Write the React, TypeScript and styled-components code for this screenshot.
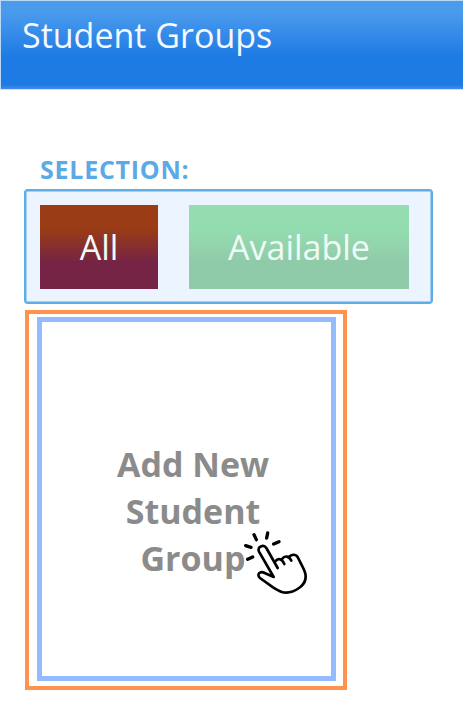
import React from "react";
import styled, { createGlobalStyle } from "styled-components";

const GlobalStyle = createGlobalStyle`
  * { box-sizing: border-box; }
  body {
    margin: 0;
    background: #fff;
    font-family: "Open Sans", "Noto Sans", sans-serif;
    overflow: hidden;
  }
`;

const Page = styled.div`
  height: 701px;
  background: #fff;
  overflow: hidden;
`;

const Header = styled.header`
  height: 90px;
  padding: 11px 0 0 21px;
  border-top: 1px solid #b9d9f7;
  border-left: 1px solid #b9d9f7;
  border-bottom: 1px solid #cfe0fc;
  background: linear-gradient(#4a9bec 0, #4a9bec 11px, #1f7be4 55px, #1f7be4 84px, #4789ed 88px);
`;

const Title = styled.h1`
  margin: 0;
  color: #f4f9ff;
  font-size: 34px;
  font-weight: 400;
  line-height: 46px;
  white-space: nowrap;
`;

const Content = styled.main`
  display: flex;
  flex-direction: column;
  align-items: flex-start;
  padding: 63px 0 0 24px;
`;

const Label = styled.div`
  height: 36px;
  padding-left: 16px;
  color: #5baae6;
  font-size: 25px;
  font-weight: 700;
  line-height: 32px;
  letter-spacing: 0.75px;
  white-space: nowrap;
`;

const Selection = styled.div`
  display: flex;
  gap: 31px;
  width: 409px;
  height: 115px;
  padding: 14px;
  border: 2px solid #5fade7;
  border-radius: 4px;
  background: #ecf5ff;
  box-shadow: inset 0 0 0 1px #a5d1f3;
`;

const FilterButton = styled.button<{ $width: number; $top: string; $bottom: string }>`
  width: ${(p) => p.$width}px;
  height: 83.5px;
  padding: 1px 0 0;
  border: 0;
  background: linear-gradient(${(p) => p.$top} 28%, ${(p) => p.$bottom} 68%);
  color: #f0faf6;
  font: 400 34px/46px "Open Sans", "Noto Sans", sans-serif;
`;

const Highlight = styled.section`
  width: 322px;
  height: 380px;
  margin: 6px 0 0 1px;
  padding: 3px 7px 5px 8px;
  border: 4px solid #ff924c;
`;

const Card = styled.div`
  position: relative;
  display: flex;
  align-items: center;
  justify-content: center;
  height: 364px;
  padding: 25px 0 0 13px;
  border: 5px solid #94bbfd;
  color: #8b8b8b;
  font-size: 34px;
  font-weight: 700;
  line-height: 47px;
  text-align: center;
`;

const CardText = styled.div`
  width: 170px;
`;

const Pointer = styled.svg`
  position: absolute;
  left: 188px;
  top: 198px;
  width: 90px;
  height: 90px;
  fill: none;
  stroke: #000;
  stroke-width: 8;
  stroke-linecap: round;
  stroke-linejoin: round;
`;

export default function App() {
  return (
    <Page>
      <GlobalStyle />
      <Header>
        <Title>Student Groups</Title>
      </Header>
      <Content>
        <Label>SELECTION:</Label>
        <Selection>
          <FilterButton $width={118} $top="#9a3c15" $bottom="#752445">All</FilterButton>
          <FilterButton $width={220} $top="#94ddb1" $bottom="#90cba9">Available</FilterButton>
        </Selection>
        <Highlight>
          <Card>
            <CardText>Add New Student Group</CardText>
            <Pointer viewBox="0 0 270 270" aria-hidden="true">
              <path
                fill="#fff"
                stroke="none"
                d="M131 171L90 94C82 80 101 72 109 84L134 125L200 108L221 147C232 170 227 190 207 204C190 216 172 222 153 215L90 172C79 162 93 152 104 160Z"
              />
              <path d="M143 144L109 84C101 72 80 80 87 95L131 171L104 159C91 151 78 163 90 174L129 202C137 207 145 212 153 215C172 222 190 216 207 204C227 190 232 170 221 147L205 115C199 101 187 102 177 110" />
              <path d="M136 124C144 113 156 116 163 132M156 117C165 105 177 108 184 122" />
              <path strokeWidth="10" d="M72 44L79 59M113 39L110 54M131 72L147 65M47 77L63 82M53 118L68 111" />
            </Pointer>
          </Card>
        </Highlight>
      </Content>
    </Page>
  );
}
